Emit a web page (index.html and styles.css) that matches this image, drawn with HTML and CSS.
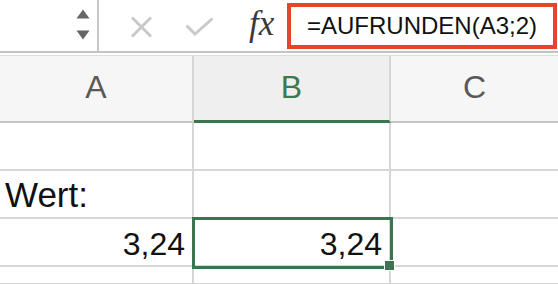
FILE: index.html
```html
<!DOCTYPE html>
<html>
<head>
<meta charset="utf-8">
<link rel="stylesheet" href="styles.css">
</head>
<body>
<div class="toolbar">
  <div class="namebox">
    <div class="spinner">
      <svg width="14" height="10" viewBox="0 0 14 10"><path d="M7 0.5 L13.5 9.5 L0.5 9.5 Z" fill="#666"/></svg>
      <svg width="14" height="10" viewBox="0 0 14 10"><path d="M0.5 0.5 L13.5 0.5 L7 9.5 Z" fill="#666"/></svg>
    </div>
  </div>
  <div class="tools">
    <svg class="ic-x" width="23" height="22" viewBox="0 0 23 22"><path d="M2 1.5 L21 20.5 M21 1.5 L2 20.5" stroke="#c9c9c9" stroke-width="3" fill="none"/></svg>
    <svg class="ic-ok" width="29" height="19" viewBox="0 0 29 19"><path d="M1.5 8.5 L10 17 L27.5 1.5" stroke="#c9c9c9" stroke-width="3" fill="none"/></svg>
    <span class="fx">fx</span>
  </div>
  <div class="formula">=AUFRUNDEN(A3;2)</div>
</div>
<div class="sheet">
  <div class="hdr">A</div>
  <div class="hdr sel">B</div>
  <div class="hdr last">C</div>

  <div class="cell"></div>
  <div class="cell"></div>
  <div class="cell last"></div>

  <div class="cell txt">Wert:</div>
  <div class="cell"></div>
  <div class="cell last"></div>

  <div class="cell num">3,24</div>
  <div class="cell num active">3,24<span class="handle"></span></div>
  <div class="cell last"></div>

  <div class="cell"></div>
  <div class="cell"></div>
  <div class="cell last"></div>
</div>
</body>
</html>
```
FILE: styles.css
```css
html, body {
  margin: 0;
  padding: 0;
  background: #fff;
  overflow: hidden;
  width: 558px;
  height: 284px;
  font-family: "Liberation Sans", Arial, sans-serif;
}

.toolbar {
  display: flex;
  align-items: center;
  height: 51px;
  border-bottom: 2px solid #c4c4c4;
  margin-bottom: 2px;
}

.namebox {
  width: 97px;
  height: 51px;
  border-right: 2px solid #c8c8c8;
  display: flex;
  justify-content: flex-end;
  align-items: center;
  box-sizing: content-box;
}

.spinner {
  display: flex;
  flex-direction: column;
  gap: 11px;
  margin-right: 7px;
  margin-top: -2px;
}

.tools {
  display: flex;
  align-items: center;
  padding-left: 31px;
  width: 155px;
}

.ic-x { margin-right: 32px; margin-top: 2px; }
.ic-ok { margin-right: 35px; margin-top: 2px; }

.fx {
  font-family: "Liberation Serif", "DejaVu Serif", serif;
  font-style: italic;
  font-size: 35px;
  color: #3a3a3a;
  margin-top: -3px;
}

.formula {
  margin-left: 2px;
  width: 246px;
  height: 38px;
  border: 4px solid #e8432b;
  display: flex;
  align-items: center;
  padding-left: 16px;
  font-size: 24px;
  color: #111;
  box-sizing: content-box;
  margin-top: 1px;
}

.sheet {
  display: grid;
  grid-template-columns: 194px 197px 167px;
  grid-template-rows: 67px 48px 48px 48px 18px;
  border-top: 1px solid #dcdcdc;
}

.hdr {
  background: #f6f6f6;
  border-right: 2px solid #d6d6d6;
  border-bottom: 2px solid #c6c6c6;
  display: flex;
  align-items: center;
  justify-content: center;
  font-size: 32px;
  color: #595959;
  padding-bottom: 2px;
}

.hdr.sel {
  background: #efefef;
  color: #3b7a50;
  border-bottom: 3px solid #3a7550;
  padding-bottom: 1px;
}

.last { border-right: none; }

.cell {
  border-right: 2px solid #d6d6d6;
  border-bottom: 2px solid #d6d6d6;
  font-size: 34px;
  color: #111;
  display: flex;
  align-items: flex-end;
  padding-bottom: 2px;
  box-sizing: border-box;
  position: relative;
}

.cell.last { border-right: none; }

.txt {
  padding-left: 5px;
  font-size: 35px;
}

.num {
  justify-content: flex-end;
  padding-right: 7px;
  font-size: 32px;
}

.active {
  outline: 3px solid #3a7550;
  outline-offset: -1px;
  z-index: 1;
}

.handle {
  position: absolute;
  right: -6px;
  bottom: -6px;
  width: 9px;
  height: 9px;
  background: #3a7550;
  border: 1px solid #fff;
}
```
